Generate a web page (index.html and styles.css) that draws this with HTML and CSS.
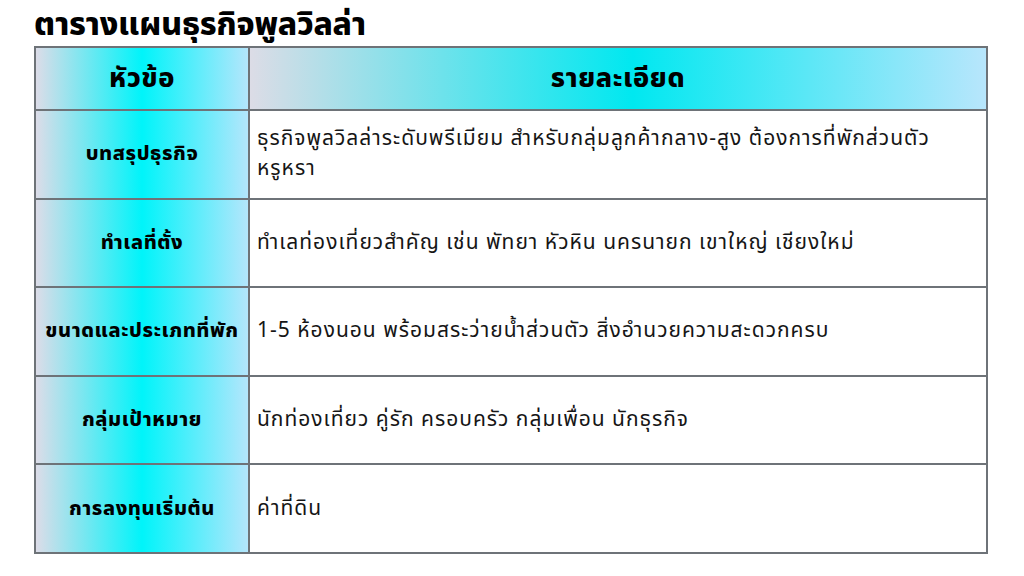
FILE: index.html
```html
<!DOCTYPE html>
<html lang="th">
<head>
<meta charset="utf-8">
<title>ตารางแผนธุรกิจพูลวิลล่า</title>
<link rel="stylesheet" href="styles.css">
</head>
<body>
<div class="page">
  <h1 class="title">ตารางแผนธุรกิจพูลวิลล่า</h1>
  <table class="plan">
    <thead>
      <tr class="head-row">
        <th class="topic">หัวข้อ</th>
        <th class="detail-head">รายละเอียด</th>
      </tr>
    </thead>
    <tbody>
      <tr>
        <th class="topic">บทสรุปธุรกิจ</th>
        <td class="detail">ธุรกิจพูลวิลล่าระดับพรีเมียม สำหรับกลุ่มลูกค้ากลาง-สูง ต้องการที่พักส่วนตัว หรูหรา</td>
      </tr>
      <tr>
        <th class="topic">ทำเลที่ตั้ง</th>
        <td class="detail">ทำเลท่องเที่ยวสำคัญ เช่น พัทยา หัวหิน นครนายก เขาใหญ่ เชียงใหม่</td>
      </tr>
      <tr>
        <th class="topic">ขนาดและประเภทที่พัก</th>
        <td class="detail">1-5 ห้องนอน พร้อมสระว่ายน้ำส่วนตัว สิ่งอำนวยความสะดวกครบ</td>
      </tr>
      <tr>
        <th class="topic">กลุ่มเป้าหมาย</th>
        <td class="detail">นักท่องเที่ยว คู่รัก ครอบครัว กลุ่มเพื่อน นักธุรกิจ</td>
      </tr>
      <tr>
        <th class="topic">การลงทุนเริ่มต้น</th>
        <td class="detail">ค่าที่ดิน</td>
      </tr>
    </tbody>
  </table>
</div>
</body>
</html>
```
FILE: styles.css
```css
html, body {
  margin: 0;
  padding: 0;
  background: #ffffff;
}
body {
  font-family: "Noto Sans Thai", "Noto Sans", "DejaVu Sans", sans-serif;
  color: #111111;
}
.page {
  width: 1024px;
  height: 576px;
  padding: 5px 0 0 34px;
  box-sizing: border-box;
}
.title {
  margin: 0;
  font-size: 32px;
  font-weight: 800;
  line-height: 41px;
  height: 41px;
  color: #000000;
  letter-spacing: -0.2px;
}
.plan {
  border-collapse: collapse;
  width: 954px;
  table-layout: fixed;
}
.plan th, .plan td {
  border: 2px solid #6e7378;
  padding: 0;
}
.plan .head-row th {
  height: 61px;
  font-size: 27px;
  font-weight: 800;
  letter-spacing: 0.6px;
  text-align: center;
  color: #000000;
}
.plan .topic {
  width: 212px;
  background: linear-gradient(to right, #dcdce8 0%, #00f4fa 50%, #b4e6fc 100%);
  font-weight: 800;
  font-size: 20px;
  letter-spacing: 0.6px;
  text-align: center;
  white-space: nowrap;
  color: #000000;
}
.plan .detail-head {
  background: linear-gradient(to right, #dcdce6 0%, #00e8f0 52%, #b8e6fc 100%);
}
.plan tbody tr {
  height: 88.6px;
}
.plan .detail {
  background: #ffffff;
  font-size: 21px;
  line-height: 30px;
  letter-spacing: 1px;
  padding: 0 8px 0 7px;
  color: #161616;
}
```
